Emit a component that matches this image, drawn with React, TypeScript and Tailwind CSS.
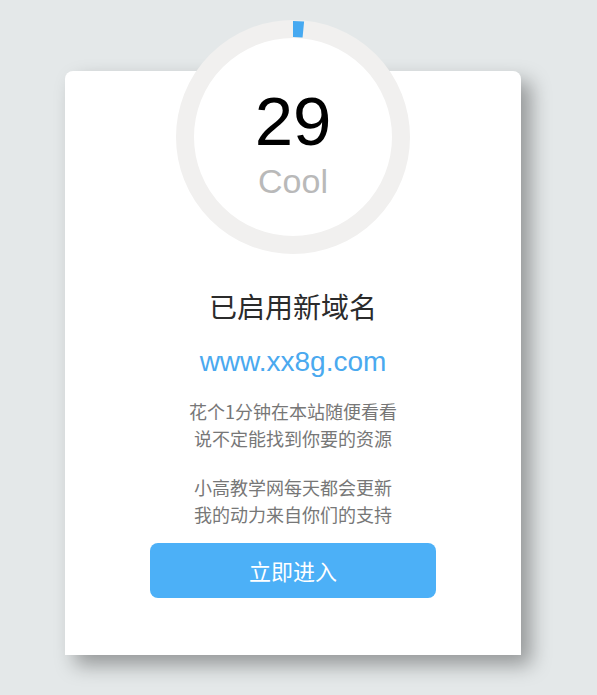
import React from "react";

export default function App() {
  const r = 108;
  const c = 2 * Math.PI * r;
  const arc = 10.5;
  return (
    <div className="min-h-[695px] w-full bg-[#e4e8e9] pt-[71px]" style={{ fontFamily: '"Liberation Sans", "Noto Sans CJK SC", sans-serif' }}>
      <div className="ml-[65px] w-[456px] rounded-t-[8px] bg-white pb-[57px] shadow-[10px_10px_20px_rgba(0,0,0,0.35)] flex flex-col items-center">
        <div className="relative -mt-[51px] h-[234px] w-[234px]">
          <svg width="234" height="234" viewBox="0 0 234 234" className="absolute inset-0">
            <circle cx="117" cy="117" r={r} fill="white" stroke="#f1f0ef" strokeWidth="18" />
            <circle
              cx="117"
              cy="117"
              r={r}
              fill="none"
              stroke="#46a9f1"
              strokeWidth="16"
              strokeDasharray={`${arc} ${c}`}
              transform="rotate(-90 117 117)"
            />
          </svg>
          <div className="relative flex h-full flex-col items-center">
            <div className="mt-[67px] text-[69px] leading-[70px] text-black">29</div>
            <div className="mt-[5px] text-[34px] leading-[38px] text-[#b9b9b9]">Cool</div>
          </div>
        </div>
        <div className="mt-[32px] text-[28px] leading-[40px] text-[#2b2b2b]" style={{ fontFamily: '"Noto Sans CJK SC", sans-serif' }}>已启用新域名</div>
        <div className="mt-[16px] text-[28px] leading-[40px] text-[#4aa9ef]">www.xx8g.com</div>
        <div className="mt-[16px] text-center text-[18px] leading-[27px] text-[#777777]" style={{ fontFamily: '"Noto Sans CJK SC", sans-serif' }}>
          <p>花个1分钟在本站随便看看</p>
          <p>说不定能找到你要的资源</p>
        </div>
        <div className="mt-[22px] text-center text-[18px] leading-[27px] text-[#777777]" style={{ fontFamily: '"Noto Sans CJK SC", sans-serif' }}>
          <p>小高教学网每天都会更新</p>
          <p>我的动力来自你们的支持</p>
        </div>
        <button className="mt-[15px] flex h-[55px] w-[286px] items-center justify-center rounded-[8px] bg-[#4cb0f7] text-[22px] text-white" style={{ fontFamily: '"Noto Sans CJK SC", sans-serif' }}>
          立即进入
        </button>
      </div>
    </div>
  );
}
